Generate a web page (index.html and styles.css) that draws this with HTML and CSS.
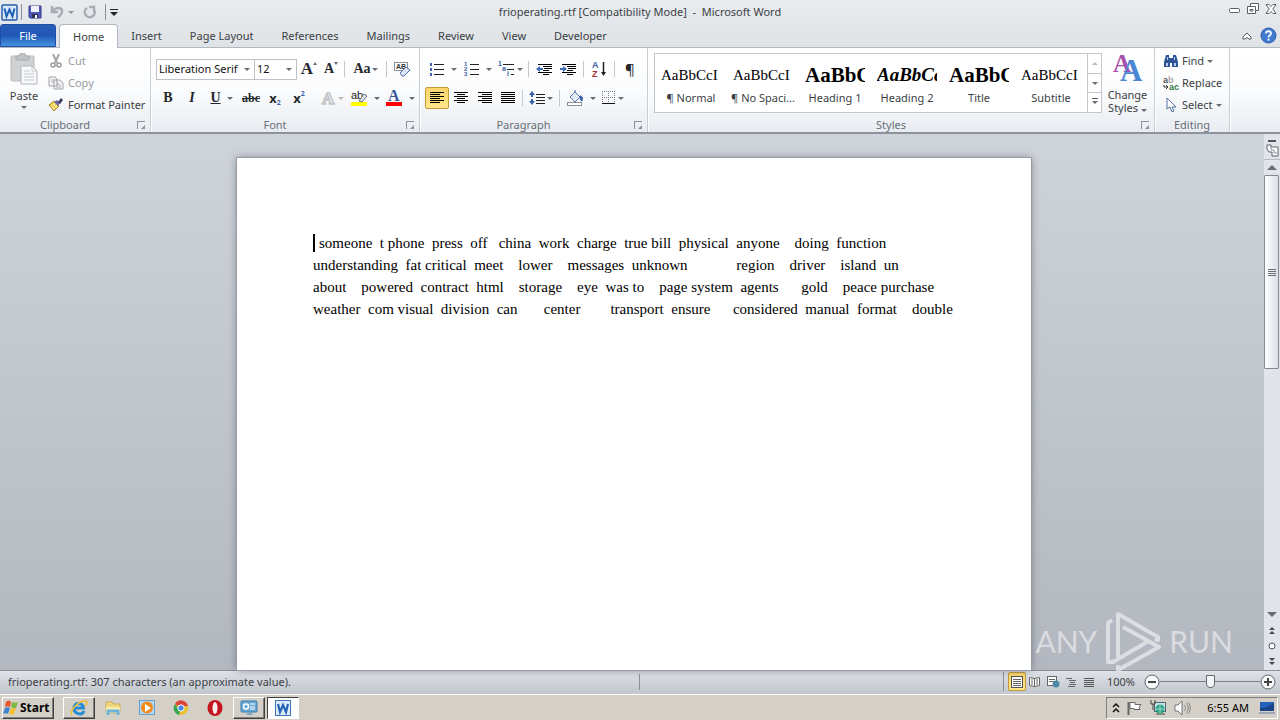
FILE: index.html
```html
<!DOCTYPE html>
<html lang="en">
<head>
<meta charset="UTF-8" />
<meta name="viewport" content="width=device-width, initial-scale=1" />
<title>frioperating.rtf [Compatibility Mode] - Microsoft Word</title>
<link rel="stylesheet" href="styles.css">
</head>
<body>
  <!-- Title bar -->
  <header class="titlebar">
    <div class="quick">
      <svg width="17" height="17" viewBox="0 0 17 17"><rect x="1" y="1" width="15" height="15" rx="1" fill="#dceafa" stroke="#2a5fa8" stroke-width="1.5"/><path d="M3.500 4.500l2 8 3-7 3 7 2-8" fill="none" stroke="#1c5fb4" stroke-width="2"/></svg>
      <span class="sep"></span>
      <button class="icon" aria-label="Save"><svg width="14" height="14" viewBox="0 0 14 14"><path d="M1 1h12v12H2L1 12z" fill="#5159b8" stroke="#343a8c"/><rect x="3" y="1" width="8" height="6" fill="#eef2fb"/><rect x="4" y="9" width="6" height="4" fill="#2d2f55"/><rect x="7" y="10" width="2" height="3" fill="#fff"/></svg></button>
      <button class="icon undo" aria-label="Undo"><svg width="25" height="14" viewBox="0 0 25 14"><path d="M2 1v6h6M3 6C6 2 12 2 12 6.500c0 3-2 4-4 6" fill="none" stroke="#a9adb3" stroke-width="2.500"/><path d="M18 6h6l-3 3z" fill="#8f949a"/></svg></button>
      <button class="icon" aria-label="Repeat"><svg width="14" height="14" viewBox="0 0 14 14"><path d="M4 3a5 5 0 1 0 7 1.500M6 2h5v5" fill="none" stroke="#a9adb3" stroke-width="2.500"/></svg></button>
      <span class="sep last"></span>
      <button class="icon" aria-label="Customize"><svg width="8" height="8" viewBox="0 0 8 8"><path d="M0 1.500h8" stroke="#222"/><path d="M0 4h8L4 8z" fill="#222"/></svg></button>
    </div>
    <div class="title">frioperating.rtf [Compatibility Mode] &nbsp;- &nbsp;Microsoft Word</div>
    <div class="window-buttons">
      <button class="icon" aria-label="Minimize"><svg width="12" height="12" viewBox="0 0 12 12"><rect x=".5" y="5.500" width="10" height="4" rx="1" fill="#fff" stroke="#5a6068"/></svg></button>
      <button class="icon" aria-label="Restore"><svg width="12" height="12" viewBox="0 0 12 12"><path d="M3.500.5h8v7h-8z" fill="#fff" stroke="#5a6068"/><path d="M.5 3.500h8v7h-8z" fill="#fff" stroke="#5a6068"/><path d="M3 6.500h3v1.500H3z" fill="none" stroke="#5a6068"/></svg></button>
      <button class="icon" aria-label="Close"><svg width="12" height="12" viewBox="0 0 12 12"><path d="M1 1.500h3l2 2 2-2h3L7.800 6 11 10.500H8l-2-2-2 2H1L4.200 6z" fill="#fff" stroke="#5a6068"/></svg></button>
    </div>
  </header>

  <!-- Tabs -->
  <nav class="tabs">
    <button class="file">File</button>
    <button class="tab active">Home</button>
    <button class="tab">Insert</button>
    <button class="tab">Page Layout</button>
    <button class="tab">References</button>
    <button class="tab">Mailings</button>
    <button class="tab">Review</button>
    <button class="tab">View</button>
    <button class="tab">Developer</button>
    <div class="help">
      <button class="icon" aria-label="Minimize the ribbon"><svg width="10" height="8" viewBox="0 0 10 8"><path d="M1 5l4-4 4 4v2H7L5 5.500 3 7H1z" fill="#fff" stroke="#50565e"/></svg></button>
      <button class="icon" aria-label="Help"><svg width="17" height="17" viewBox="0 0 17 17"><circle cx="8.500" cy="8.500" r="7.500" fill="#3f7bd0" stroke="#2c5ca8"/><path d="M6 6.500C6 3.500 11 3.500 11 6.500c0 1.800-2.500 1.800-2.500 4" fill="none" stroke="#fff" stroke-width="1.800"/><circle cx="8.500" cy="12.700" r="1.100" fill="#fff"/></svg></button>
    </div>
  </nav>

  <!-- Ribbon -->
  <main class="ribbon">
    <section class="group clipboard">
      <div class="controls">
        <button class="big paste">
          <svg width="30" height="32" viewBox="0 0 30 32"><rect x="2" y="3" width="23" height="25" rx="1" fill="#d0d1d3" stroke="#b9bbbd"/><path d="M7 3h3c0-4 7-4 7 0h3v4H7z" fill="#c0c2c4" stroke="#a9abad"/><path d="M12 13h11l5 5v13H12z" fill="#f7f8f9" stroke="#b3b5b8"/><path d="M23 13v5h5M15 18h6M15 21h10M15 24h10M15 27h10" fill="none" stroke="#c9cbce"/></svg>
          <span>Paste</span><i class="arrow"></i>
        </button>
        <div class="stack">
          <button class="line dim"><svg width="16" height="14" viewBox="0 0 16 14"><path d="M5 0l4 9M11 0L7 9" stroke="#a4a6a9" stroke-width="2"/><circle cx="5" cy="11" r="2" fill="none" stroke="#999b9e" stroke-width="1.500"/><circle cx="11" cy="11" r="2" fill="none" stroke="#999b9e" stroke-width="1.500"/></svg>Cut</button>
          <button class="line dim"><svg width="16" height="14" viewBox="0 0 16 14"><path d="M1 1h6l2 2v7H1zM6 4h6l3 3v6H6z" fill="#f3f3f4" stroke="#a2a4a7"/><path d="M3 4h3M3 6h3M8 7h3M8 9h5M8 11h5" stroke="#b3b5b8"/></svg>Copy</button>
          <button class="line"><svg width="16" height="14" viewBox="0 0 16 14"><path d="M1 7l5-4 5 5-5 5z" fill="#f3d45c" stroke="#a28425"/><path d="M6 4l3-2 3 3-2 3z" fill="#6c67ab"/><path d="M10 4l3-4 2 2-3 4z" fill="#39395c"/><path d="M3 8l4 4M5 6l4 4" stroke="#fff5b8"/></svg>Format Painter</button>
        </div>
      </div>
      <footer>Clipboard<button class="launch" aria-label="Clipboard options"></button></footer>
    </section>

    <section class="group font">
      <div class="controls rows">
        <div class="row">
          <select class="family" aria-label="Font"><option>Liberation Serif</option></select>
          <select class="size" aria-label="Font size"><option>12</option></select>
          <button class="tool serif grow">A<i class="arrow up"></i></button>
          <button class="tool serif shrink">A<i class="arrow"></i></button>
          <span class="sep"></span>
          <button class="tool wide serif case">Aa<i class="arrow"></i></button>
          <span class="sep"></span>
          <button class="tool" aria-label="Clear formatting"><svg width="18" height="17" viewBox="0 0 18 17"><rect x="1.500" y="1.500" width="13" height="8" fill="#fff" stroke="#8c929b"/><text x="3" y="8" font-size="7" font-weight="bold" fill="#333">AB</text><path d="M7 12l6-6 4 3-6 6H9z" fill="#dbe5f6" stroke="#5271a8"/></svg></button>
        </div>
        <div class="row">
          <button class="tool serif"><b>B</b></button>
          <button class="tool serif"><em>I</em></button>
          <button class="tool wide serif"><u>U</u><i class="arrow"></i></button>
          <button class="tool serif strike"><s>abc</s></button>
          <button class="tool script">x<sub>2</sub></button>
          <button class="tool script">x<sup>2</sup></button>
          <span class="sep"></span>
          <button class="tool mid" aria-label="Text effects"><svg width="16" height="16" viewBox="0 0 16 16"><text x="2" y="14" class="letter" font-size="17" fill="#fff" stroke="#c3c5c8" stroke-width="1.500">A</text></svg><i class="arrow pale"></i></button>
          <button class="tool wide" aria-label="Highlight"><svg width="18" height="18" viewBox="0 0 18 18"><rect x="1" y="13" width="16" height="4" fill="#ff0"/><text x="1" y="10" font-size="11" fill="#222">ab</text><path d="M9 12l5-7 3 2-5 6z" fill="#e3e5e9" stroke="#68707b"/></svg><i class="arrow"></i></button>
          <button class="tool wide" aria-label="Font color"><svg width="18" height="18" viewBox="0 0 18 18"><text x="3" y="12" class="letter" font-size="16" fill="#39589b">A</text><rect x="1" y="13" width="16" height="4" fill="#f00"/></svg><i class="arrow"></i></button>
        </div>
      </div>
      <footer>Font<button class="launch" aria-label="Font options"></button></footer>
    </section>

    <section class="group paragraph">
      <div class="controls rows">
        <div class="row">
          <button class="tool wide" aria-label="Bullets"><svg width="16" height="16" viewBox="0 0 16 16"><path d="M5 3.500h10M5 8.500h10M5 13.500h10" stroke="#222"/><path d="M1 2h2v3H1zM1 7h2v3H1zM1 12h2v3H1z" fill="#3c62a8"/></svg><i class="arrow"></i></button>
          <button class="tool wide" aria-label="Numbering"><svg width="16" height="16" viewBox="0 0 16 16"><path d="M6 3.500h9M6 8.500h9M6 13.500h9" stroke="#222"/><g font-size="6" font-weight="bold" fill="#3c62a8"><text x="0" y="5">1</text><text x="0" y="10">2</text><text x="0" y="15">3</text></g></svg><i class="arrow"></i></button>
          <button class="tool mid" aria-label="Multilevel list"><svg width="17" height="16" viewBox="0 0 17 16"><path d="M5 3.500h11M9 8.500h7M13 13.500h3" stroke="#222"/><g font-size="7" font-weight="bold" fill="#3c62a8"><text x="0" y="5">1</text><text x="4" y="10">a</text><text x="9" y="15">i</text></g></svg><i class="arrow"></i></button>
          <span class="sep"></span>
          <button class="tool" aria-label="Decrease indent"><svg width="16" height="14" viewBox="0 0 16 14"><path d="M2 2.500h14M7 4.500h9M8 6.500h8M7 8.500h6M2 10.500h14M7 12.500h6" stroke="#000"/><path d="M0 7l4-3v2h3v2H4v2z" fill="#3d6cb9"/></svg></button>
          <button class="tool" aria-label="Increase indent"><svg width="16" height="14" viewBox="0 0 16 14"><path d="M2 2.500h14M7 4.500h9M8 6.500h8M7 8.500h6M2 10.500h14M7 12.500h6" stroke="#000"/><path d="M7 7L3 4v2H0v2h3v2z" fill="#3d6cb9"/></svg></button>
          <span class="sep"></span>
          <button class="tool" aria-label="Sort"><svg width="16" height="18" viewBox="0 0 16 18"><text x="1" y="8" font-size="9" font-weight="bold" fill="#3c62a8">A</text><text x="1" y="17" font-size="9" font-weight="bold" fill="#a52f36">Z</text><path d="M12.500 2v12" stroke="#222" stroke-width="1.500"/><path d="M10 12h5l-2.500 4z" fill="#222"/></svg></button>
          <span class="sep"></span>
          <button class="tool pilcrow">¶</button>
        </div>
        <div class="row">
          <button class="tool on" aria-label="Align left"><svg width="16" height="14" viewBox="0 0 16 14"><path d="M1 1.500h14M1 3.500h10M1 5.500h14M1 7.500h10M1 9.500h14M1 11.500h10" stroke="#000"/></svg></button>
          <button class="tool" aria-label="Center"><svg width="16" height="14" viewBox="0 0 16 14"><path d="M1 1.500h14M4 3.500h8M1 5.500h14M4 7.500h8M1 9.500h14M4 11.500h8" stroke="#000"/></svg></button>
          <button class="tool" aria-label="Align right"><svg width="16" height="14" viewBox="0 0 16 14"><path d="M1 1.500h14M5 3.500h10M1 5.500h14M5 7.500h10M1 9.500h14M5 11.500h10" stroke="#000"/></svg></button>
          <button class="tool narrow" aria-label="Justify"><svg width="16" height="14" viewBox="0 0 16 14"><path d="M1 1.500h14M1 3.500h14M1 5.500h14M1 7.500h14M1 9.500h14M1 11.500h14" stroke="#000"/></svg></button>
          <span class="sep"></span>
          <button class="tool mid" aria-label="Line spacing"><svg width="16" height="16" viewBox="0 0 16 16"><path d="M7 4.500h9M7 7.500h9M7 10.500h9M7 13.500h9" stroke="#222"/><path d="M0 5l3-4 3 4H4v2H2V5zM0 11l3 4 3-4H4V9H2v2z" fill="#3c62a8"/></svg><i class="arrow"></i></button>
          <span class="sep"></span>
          <button class="tool wide" aria-label="Shading"><svg width="18" height="16" viewBox="0 0 18 16"><path d="M4 7l5-5 5 5-5 5z" fill="#e6edf8" stroke="#5271a8"/><path d="M9 2V0M14 6c3 0 3 3 2 5-2 0-1-3-3-4z" fill="#3c62a8" stroke="#3c62a8"/><rect x="1.500" y="12.500" width="14" height="3" fill="#fff" stroke="#8b9098"/></svg><i class="arrow"></i></button>
          <button class="tool mid" aria-label="Borders"><svg width="14" height="14" viewBox="0 0 14 14"><path d="M.5 0v13M6.500 0v13M12.500 0v13M0 .5h13M0 6.500h13" stroke="#7c8086" stroke-dasharray="1 1"/><path d="M0 12.500h13" stroke="#111"/></svg><i class="arrow"></i></button>
        </div>
      </div>
      <footer>Paragraph<button class="launch" aria-label="Paragraph options"></button></footer>
    </section>

    <section class="group styles">
      <div class="controls">
        <div class="gallery">
          <button class="style"><span class="sample">AaBbCcI</span>¶ Normal</button>
          <button class="style"><span class="sample">AaBbCcI</span>¶ No Spaci...</button>
          <button class="style"><span class="sample heading">AaBbC</span>Heading 1</button>
          <button class="style"><span class="sample heading slanted">AaBbCc</span>Heading 2</button>
          <button class="style"><span class="sample heading">AaBbC</span>Title</button>
          <button class="style"><span class="sample">AaBbCcI</span>Subtitle</button>
          <div class="pager">
            <button aria-label="Previous styles"><i class="arrow up pale"></i></button>
            <button aria-label="Next styles"><i class="arrow"></i></button>
            <button aria-label="More styles"><i class="arrow more"></i></button>
          </div>
        </div>
        <button class="big change">
          <svg width="32" height="30" viewBox="0 0 32 30"><g class="letter"><text x="1" y="19" font-size="25" fill="#a74fae">A</text><text x="8" y="28" font-size="31" fill="#4c86d3">A</text></g></svg>
          <span>Change</span><span>Styles <i class="arrow"></i></span>
        </button>
      </div>
      <footer>Styles<button class="launch" aria-label="Styles options"></button></footer>
    </section>

    <section class="group editing">
      <div class="controls">
        <div class="stack">
          <button class="line"><svg width="16" height="14" viewBox="0 0 16 14"><path d="M3 1h3v3h4V1h3l2 7v5H9V9H7v4H1V8z" fill="#2e5394"/><path d="M3 9h2v3H3zM11 9h2v3h-2zM4 3h1v3H4zM11 3h1v3h-1z" fill="#b8cdec"/></svg>Find <i class="arrow"></i></button>
          <button class="line"><svg width="16" height="15" viewBox="0 0 16 15"><g font-size="9" font-weight="bold"><text x="0" y="7" fill="#555">a</text><text x="5" y="7" fill="#aaa">b</text><text x="6" y="14" fill="#327a45">ac</text></g><path d="M1 9v2h3M3 9l2 2-2 2" fill="none" stroke="#333"/></svg>Replace</button>
          <button class="line"><svg width="16" height="14" viewBox="0 0 16 14"><path d="M4 0v11l3-2 2 5 2-1-2-4h4z" fill="#fff" stroke="#51709f"/></svg>Select <i class="arrow"></i></button>
        </div>
      </div>
      <footer>Editing</footer>
    </section>
  </main>

  <!-- Document -->
  <div class="workspace">
    <div class="canvas">
      <article class="page">
<p><span class="caret"></span>someone  t phone  press  off   china  work  charge  true bill  physical  anyone    doing  function</p>
<p>understanding  fat critical  meet    lower    messages  unknown             region    driver    island  un</p>
<p>about    powered  contract  html    storage    eye  was to    page system  agents      gold    peace purchase</p>
<p>weather  com visual  division  can       center        transport  ensure      considered  manual  format    double</p>
      </article>
      <div class="watermark">
        <span>ANY</span>
        <svg width="58" height="62" viewBox="0 0 58 62"><g fill="none" stroke="#e6e8eb" stroke-width="4" stroke-linejoin="round"><path d="M8 10l-4 3v39h5l34-20"/><path d="M14 47V4l40 23v3l-3-1"/><path d="M19 17l36 20-41 23v-5"/></g></svg>
        <span>RUN</span>
      </div>
    </div>
    <div class="scrollbar">
      <button class="split" aria-label="Split"></button>
      <button class="icon ruler" aria-label="View ruler"><svg width="13" height="13" viewBox="0 0 13 13"><path d="M1 1h4v2h7v9H6V8H3L1 5z" fill="#fff" stroke="#5d636b"/><path d="M5 3v3h3v3h3" fill="none" stroke="#8a9098"/></svg></button>
      <button class="icon step" aria-label="Scroll up"><i class="arrow up large"></i></button>
      <div class="track"><div class="thumb"></div></div>
      <button class="icon step" aria-label="Scroll down"><i class="arrow large"></i></button>
      <button class="icon browse" aria-label="Previous page"><svg width="8" height="8" viewBox="0 0 8 8"><path d="M1 4l3-3 3 3zM1 8l3-3 3 3z" fill="#444a52"/></svg></button>
      <button class="icon browse" aria-label="Browse object"><svg width="8" height="8" viewBox="0 0 8 8"><circle cx="4" cy="4" r="3" fill="#fff" stroke="#50565e"/></svg></button>
      <button class="icon browse" aria-label="Next page"><svg width="8" height="8" viewBox="0 0 8 8"><path d="M1 0l3 3 3-3zM1 4l3 3 3-3z" fill="#444a52"/></svg></button>
    </div>
  </div>

  <!-- Status bar -->
  <div class="statusbar">
    <div class="message">frioperating.rtf: 307 characters (an approximate value).</div>
    <div class="options">
      <div class="views">
        <button class="view on" aria-label="Print layout"><svg width="12" height="12" viewBox="0 0 12 12"><rect x=".5" y=".5" width="11" height="11" fill="#fff" stroke="#555"/><path d="M2 3.500h8M2 5.500h8M2 7.500h8M2 9.500h8" stroke="#666"/></svg></button>
        <button class="view" aria-label="Full screen reading"><svg width="12" height="12" viewBox="0 0 12 12"><path d="M.5 1.500l5 1 5-1v8l-5 1-5-1zM5.500 2v9M2 4h2M2 6h2M7 4h2M7 6h2M7 8h2M2 8h2" fill="#fff" stroke="#666"/></svg></button>
        <button class="view" aria-label="Web layout"><svg width="13" height="12" viewBox="0 0 13 12"><rect x=".5" y=".5" width="9" height="9" fill="#fff" stroke="#666"/><path d="M2 3.500h6M2 5.500h6" stroke="#666"/><circle cx="9" cy="8" r="3.500" fill="#4b8ba3"/></svg></button>
        <button class="view" aria-label="Outline"><svg width="12" height="12" viewBox="0 0 12 12"><path d="M1 2.500h6M4 4.500h7M5 6.500h5M4 8.500h7M3 10.500h7" stroke="#666"/></svg></button>
        <button class="view" aria-label="Draft"><svg width="12" height="12" viewBox="0 0 12 12"><path d="M1 2.500h10M1 4.500h10M1 6.500h10M1 8.500h10M1 10.500h10" stroke="#555"/></svg></button>
      </div>
      <button class="percent">100%</button>
      <button class="icon" aria-label="Zoom out"><svg width="16" height="16" viewBox="0 0 16 16"><circle cx="8" cy="8" r="7" fill="#f7f8fa" stroke="#5f656e"/><path d="M4 8h8" stroke="#444" stroke-width="2"/></svg></button>
      <input class="zoom" type="range" min="0" max="100" value="50" aria-label="Zoom">
      <button class="icon" aria-label="Zoom in"><svg width="16" height="16" viewBox="0 0 16 16"><circle cx="8" cy="8" r="7" fill="#f7f8fa" stroke="#5f656e"/><path d="M4 8h8M8 4v8" stroke="#444" stroke-width="2"/></svg></button>
    </div>
  </div>

  <!-- Taskbar -->
  <div class="taskbar">
    <button class="start raised"><svg width="17" height="16" viewBox="0 0 17 16"><path d="M3 2c2-2 4-1 5 0L7 7C5 6 4 6 2 7z" fill="#e8562a"/><path d="M9 2c2 1 4 1 6 0l-2 6c-2 1-3 0-5-1z" fill="#82b841"/><path d="M2 8c2-1 3-1 5 0l-2 6c-1-1-3-1-5 0z" fill="#3f83d0"/><path d="M8 8c2 1 3 1 5 0l-2 6c-2 1-3 1-5 0z" fill="#f6c12f"/></svg>Start</button>
    <div class="launchers">
      <button class="task raised" aria-label="Internet Explorer"><svg width="18" height="18" viewBox="0 0 18 18"><path d="M14 12c-2 5-10 3-10-3s9-6 9.500 0H5" fill="none" stroke="#268bd2" stroke-width="3"/><path d="M2 16C-1 12 9 1 16 2c2 1 0 4-1 5" fill="none" stroke="#eebb36" stroke-width="1.500"/></svg></button>
      <button class="task" aria-label="Explorer"><svg width="18" height="18" viewBox="0 0 18 18"><path d="M2 3h6l1 2h7v9H2z" fill="#f0d680" stroke="#cfae52"/><path d="M2 8h14v6H2z" fill="#faecaa"/><path d="M4 16v-4h10v4" fill="none" stroke="#6bb5dd" stroke-width="3"/></svg></button>
      <button class="task" aria-label="Media Player"><svg width="18" height="18" viewBox="0 0 18 18"><rect x="1.500" y="1.500" width="15" height="14" fill="#b5d9f4" stroke="#659fcd"/><circle cx="9" cy="8.500" r="6" fill="#f08a1c"/><path d="M7 5l6 4-6 4z" fill="#fff"/></svg></button>
      <button class="task" aria-label="Chrome"><svg width="18" height="18" viewBox="0 0 18 18"><circle cx="9" cy="9" r="7" fill="#eac02f"/><path d="M9 9L3 5a7 7 0 0 1 13 2H9z" fill="#dc4437"/><path d="M3 5l5 7-1 4A7 7 0 0 1 3 5z" fill="#37a854"/><circle cx="9" cy="9" r="3.200" fill="#4c87e8" stroke="#fff"/></svg></button>
      <button class="task" aria-label="Opera"><svg width="18" height="18" viewBox="0 0 18 18"><ellipse cx="9" cy="9" rx="7.500" ry="8" fill="#c4161f"/><ellipse cx="9" cy="9" rx="2.500" ry="6" fill="#f6eeee"/></svg></button>
      <button class="task raised" aria-label="Control panel"><svg width="18" height="18" viewBox="0 0 18 18"><rect x="1" y="2" width="16" height="11" rx="1" fill="#69a7d5" stroke="#397eae"/><circle cx="6" cy="7.500" r="2.500" fill="none" stroke="#fff" stroke-width="1.500"/><path d="M10 5h5M10 8h5M10 10h5" stroke="#fff"/><path d="M6 16h7l-2-3H8z" fill="#7fa5c1"/></svg></button>
      <button class="task pressed" aria-label="Word"><svg width="18" height="18" viewBox="0 0 18 18"><rect x="1.500" y="1.500" width="15" height="15" fill="#dceafa" stroke="#3f74b7"/><path d="M4 5l2 8 3-7 3 7 2-8" fill="none" stroke="#2563b5" stroke-width="2.200"/></svg></button>
    </div>
    <div class="tray">
      <svg width="8" height="12" viewBox="0 0 8 12"><path d="M1 5l3-3 3 3M1 10l3-3 3 3" fill="none" stroke="#111" stroke-width="1.500"/></svg>
      <svg width="16" height="16" viewBox="0 0 16 16"><path d="M1.500 2v13" stroke="#666" stroke-width="2"/><path d="M3 2.500h5v2h6l-2 3 1 2H7v-1H3z" fill="#fff" stroke="#666"/></svg>
      <svg width="17" height="17" viewBox="0 0 17 17"><rect x="4.500" y="3.500" width="11" height="9" fill="#c7e3ec" stroke="#4c6870"/><path d="M1 1v4h4V1M3 5v6M6 15h9" fill="none" stroke="#444"/><circle cx="10" cy="10" r="4.500" fill="#28a184"/><path d="M6 10h8M10 6v8" stroke="#a3e1cf"/></svg>
      <svg width="17" height="16" viewBox="0 0 17 16"><path d="M1 5h3l4-4v14l-4-4H1z" fill="#fff" stroke="#777"/><path d="M10 5c2 2 2 4 0 6M12 3c3 3 3 7 0 10M14 2c3 4 3 8 0 12" fill="none" stroke="#888"/></svg>
      <time>6:55 AM</time>
      <svg width="16" height="15" viewBox="0 0 16 15"><path d="M1 2h14v9H1z" fill="#2462ba"/><path d="M1 8c5 0 9-2 14-5v8H1z" fill="#194489"/><path d="M0 12h16v2H0z" fill="#9da8b4"/></svg>
    </div>
  </div>
</body>
</html>
```

FILE: styles.css
```css
* {
    box-sizing: border-box;
}
body {
    margin: 0;
    height: 100vh;
    display: flex;
    flex-direction: column;
    overflow: hidden;
    font-family: "Noto Sans", "Open Sans", sans-serif;
    font-size: 11px;
    line-height: 16px;
    color: #3b3f45;
    background: #dfe3e8;
}
button {
    font: inherit;
    color: inherit;
    padding: 0;
    border: 0;
    background: none;
    white-space: nowrap;
}
svg {
    display: block;
    flex: none;
}
svg text {
    font-family: "Liberation Sans", sans-serif;
}
svg text.letter, .letter text {
    font-family: "Liberation Serif", serif;
    font-weight: bold;
}
.icon {
    display: flex;
    align-items: center;
    justify-content: center;
}
.sep {
    width: 1px;
    height: 16px;
    background: #c5c9ce;
}
.arrow {
    display: inline-block;
    flex: none;
    border: 3px solid transparent;
    border-top-color: #686d74;
    border-bottom: 0;
}
.arrow.up {
    border-top: 0;
    border-bottom: 3px solid #686d74;
}
.arrow.pale {
    border-top-color: #bbb;
    border-bottom-color: #bbb;
}
.arrow.large {
    border-left-width: 5px;
    border-right-width: 5px;
    border-top-width: 5px;
}
.arrow.up.large {
    border-top-width: 0;
    border-bottom-width: 5px;
}

/* Title bar and tabs */
.titlebar {
    display: grid;
    grid-template-columns: 1fr auto 1fr;
    height: 24px;
    flex: none;
    background: linear-gradient(#e9ecef, #e3e6ea);
}
.quick {
    display: flex;
    align-items: center;
    gap: 8px;
    padding: 0 1px;
}
.quick .sep {
    margin: 0 -2px 0 -5px;
    background: #8a8f96;
}
.quick .sep.last {
    margin: 0 -4px 0 0;
}
.title {
    align-self: center;
}
.window-buttons {
    display: flex;
    justify-content: flex-end;
    gap: 6px;
    padding: 3px 3px 0 0;
    align-items: flex-start;
}
.tabs {
    display: flex;
    height: 24px;
    flex: none;
    background: linear-gradient(#e3e6ea, #dfe3e6);
    border-bottom: 1px solid #b3b8be;
}
.tabs .file {
    width: 56px;
    color: #fff;
    border: 1px solid #1f4fa5;
    border-radius: 3px 3px 0 0;
    background: linear-gradient(#2a5db8, #1f57b8 50%, #4793e0);
}
.tab {
    padding: 0 13px;
    border: 1px solid transparent;
    border-bottom: 0;
}
.tab.active {
    margin: 0 -1px -1px 3px;
    background: #fff;
    border-color: #b3b8be;
    border-radius: 4px 4px 0 0;
}
.help {
    display: flex;
    gap: 8px;
    margin-left: auto;
    padding-right: 3px;
}

/* Ribbon */
.ribbon {
    display: flex;
    height: 86px;
    flex: none;
    background: linear-gradient(#fff, #fbfcfd 50%, #e8ecf1);
    border-bottom: 2px solid #8d939c;
}
.group {
    display: flex;
    flex-direction: column;
    flex: none;
    border-right: 1px solid #c8ced6;
    box-shadow: 1px 0 #fff;
}
.controls {
    display: flex;
    flex: 1;
    min-height: 0;
}
.group footer {
    position: relative;
    height: 15px;
    padding-right: 20px;
    text-align: center;
    color: #696f78;
}
.launch {
    position: absolute;
    right: 5px;
    bottom: 3px;
    width: 8px;
    height: 8px;
    border-top: 1px solid #8d929a;
    border-left: 1px solid #8d929a;
}
.launch::after {
    content: "";
    position: absolute;
    right: 0;
    bottom: 0;
    border: 2px solid #8d929a;
    border-top-color: transparent;
    border-left-color: transparent;
}
.clipboard {
    width: 151px;
}
.font {
    width: 269px;
}
.paragraph {
    width: 228px;
}
.styles {
    width: 507px;
}
.editing {
    width: 75px;
}
.editing footer {
    padding: 0;
}
.big {
    display: flex;
    flex-direction: column;
    align-items: center;
    line-height: 13px;
    padding-top: 5px;
}
.big.paste {
    width: 48px;
}
.big.paste span {
    margin: 4px 0;
}
.stack {
    display: flex;
    flex-direction: column;
    padding-top: 2px;
}
.line {
    display: flex;
    align-items: center;
    gap: 4px;
    height: 22px;
}
.line.dim {
    color: #9a9da1;
}
.editing .stack {
    padding-left: 8px;
}
.editing .line {
    gap: 3px;
}
.rows {
    flex-direction: column;
    padding: 10px 4px 0 5px;
    gap: 7px;
}
.row {
    display: flex;
    align-items: center;
    height: 22px;
}
.row .sep {
    margin: 0 3px;
}
.row select {
    height: 21px;
    padding: 0 2px;
    border: 1px solid #bdc2c9;
    border-radius: 0;
    appearance: none;
    font: inherit;
    color: #111;
    background: #fff url("data:image/svg+xml,%3Csvg xmlns='http://www.w3.org/2000/svg' width='6' height='3'%3E%3Cpath d='M0 0h6L3 3z' fill='%23686d74'/%3E%3C/svg%3E") no-repeat right 4px center;
}
.row .family {
    width: 99px;
}
.row .size {
    width: 43px;
    margin-left: -1px;
}
.tool {
    display: flex;
    align-items: center;
    justify-content: center;
    width: 24px;
    height: 22px;
    flex: none;
    color: #24272b;
}
.tool.wide {
    width: 35px;
    gap: 6px;
}
.tool.mid {
    width: 30px;
    gap: 2px;
}
.tool.narrow {
    width: 22px;
}
.tool.on, .view.on {
    border: 1px solid #c29a36;
    border-radius: 2px;
    background: linear-gradient(#fbd66c, #ffe68a);
}
.serif {
    font-family: "Liberation Serif", serif;
    font-size: 14px;
    font-weight: bold;
}
.tool.grow {
    font-size: 17px;
}
.grow .arrow, .shrink .arrow {
    align-self: flex-start;
    margin-top: 4px;
    border-left-width: 2px;
    border-right-width: 2px;
}
.row .tool.shrink {
    width: 20px;
}
.row .tool.case {
    gap: 1px;
}
.row .tool.strike {
    font-size: 12px;
}
.script {
    font-weight: bold;
    font-size: 13px;
}
.script sub, .script sup {
    font-size: 7px;
    line-height: 8px;
    color: #3c62a8;
}
.script sub {
    align-self: flex-end;
    margin-bottom: 2px;
}
.script sup {
    align-self: flex-start;
    margin-top: 3px;
}
.tool.pilcrow {
    font-size: 15px;
}

/* Style gallery */
.gallery {
    display: flex;
    height: 60px;
    margin: 5px 0 0 6px;
    border: 1px solid #c3c8cf;
    background: #fff;
}
.style {
    display: flex;
    flex-direction: column;
    align-items: center;
    width: 72px;
    padding: 8px 6px 0;
}
.sample {
    width: 60px;
    height: 24px;
    margin-bottom: 4px;
    overflow: hidden;
    text-align: left;
    font-family: "Liberation Serif", serif;
    font-size: 15px;
    line-height: 26px;
    color: #000;
}
.sample.heading {
    font-size: 21px;
    font-weight: bold;
}
.sample.slanted {
    font-style: italic;
    font-size: 19px;
}
.pager {
    display: flex;
    flex-direction: column;
    width: 14px;
    border-left: 1px solid #c3c8cf;
}
.pager button {
    flex: 1;
    display: flex;
    align-items: center;
    justify-content: center;
}
.pager button + button {
    border-top: 1px solid #c3c8cf;
}
.arrow.more {
    position: relative;
}
.arrow.more::before {
    content: "";
    position: absolute;
    left: -3px;
    top: -6px;
    width: 6px;
    height: 1px;
    background: #50565e;
}
.change {
    width: 51px;
}
.change svg {
    margin-bottom: 5px;
}

/* Document */
.workspace {
    display: flex;
    flex: 1;
    min-height: 0;
    background: linear-gradient(#cfd3da, #b3b7bf);
}
.canvas {
    position: relative;
    flex: 1;
    display: flex;
    justify-content: center;
    padding: 24px 0 0 4px;
}
.page {
    width: 794px;
    padding: 74px 76px 0;
    background: #fff;
    box-shadow: 0 0 0 1px #969ca5, 0 0 8px rgba(70, 75, 85, 0.6);
    font-family: "Liberation Serif", serif;
    font-size: 15px;
    line-height: 22px;
    color: #000;
}
.page p {
    margin: 0;
    white-space: pre;
}
.caret {
    display: inline-block;
    width: 2px;
    height: 18px;
    margin: -4px 4px 0 0;
    vertical-align: middle;
    background: #000;
}
.watermark {
    position: absolute;
    right: 31px;
    bottom: -2px;
    display: flex;
    align-items: center;
    gap: 7px;
    font-family: "Lato", sans-serif;
    font-size: 30px;
    line-height: 60px;
    color: #e3e5e8;
    opacity: 0.8;
}
.scrollbar {
    display: flex;
    flex-direction: column;
    width: 16px;
    background: #e1e5eb;
}
.split {
    height: 8px;
    margin: 0 4px;
    border-bottom: 2px solid #50565e;
}
.ruler {
    height: 18px;
    border-bottom: 1px solid #b5bac2;
}
.step {
    height: 15px;
}
.track {
    flex: 1;
    margin-right: 1px;
}
.thumb {
    display: flex;
    height: 45%;
    border: 1px solid #848a94;
    border-radius: 1px;
    background: linear-gradient(90deg, #fff, #dce0e8);
}
.thumb::after {
    content: "";
    width: 8px;
    height: 7px;
    margin: auto;
    background: repeating-linear-gradient(#6b717a 0 1px, transparent 1px 2px);
}
.browse {
    height: 16px;
}

/* Status bar */
.statusbar {
    display: flex;
    align-items: center;
    height: 24px;
    flex: none;
    padding-bottom: 2px;
    border-top: 1px solid #8b9098;
    background: linear-gradient(#dfe2e7, #c2c6cd);
}
.message {
    width: 50%;
    padding-left: 8px;
    border-right: 1px solid #8b9098;
}
.options {
    display: flex;
    flex: 1;
    align-items: center;
    justify-content: flex-end;
    padding-right: 4px;
}
.views {
    display: flex;
    padding-left: 4px;
    border-left: 1px solid #8b9098;
}
.view {
    display: flex;
    align-items: center;
    justify-content: center;
    width: 18px;
    height: 19px;
}
.percent {
    width: 46px;
}
.zoom {
    width: 100px;
    height: 16px;
    margin: 0;
    appearance: none;
    background: linear-gradient(#7a8089, #7a8089) no-repeat center / 100% 1px;
}
.zoom::-webkit-slider-thumb {
    appearance: none;
    width: 9px;
    height: 13px;
    border: 1px solid #656b74;
    border-radius: 1px 1px 5px 5px;
    background: #f4f5f7;
}

/* Taskbar */
.taskbar {
    display: flex;
    align-items: center;
    height: 26px;
    flex: none;
    padding: 0 2px;
    border-top: 1px solid #fff;
    background: #d4d0c8;
    color: #000;
}
.raised {
    border: 1px solid #fff;
    border-right-color: #404040;
    border-bottom-color: #404040;
    box-shadow: inset -1px -1px #808080;
}
.start {
    display: flex;
    align-items: center;
    width: 52px;
    height: 22px;
    font-weight: bold;
    font-size: 12px;
}
.launchers {
    display: flex;
    gap: 2px;
    margin-left: 9px;
}
.task {
    display: flex;
    align-items: center;
    justify-content: center;
    width: 32px;
    height: 22px;
}
.pressed {
    border: 1px solid #404040;
    border-right-color: #fff;
    border-bottom-color: #fff;
    background: #fff;
}
.tray {
    display: flex;
    align-items: center;
    gap: 7px;
    height: 22px;
    margin-left: auto;
    padding: 0 2px 0 5px;
    border: 1px solid #808080;
    border-right-color: #fff;
    border-bottom-color: #fff;
}
.tray time {
    margin: 0 3px 0 9px;
    font-size: 11px;
}
```
